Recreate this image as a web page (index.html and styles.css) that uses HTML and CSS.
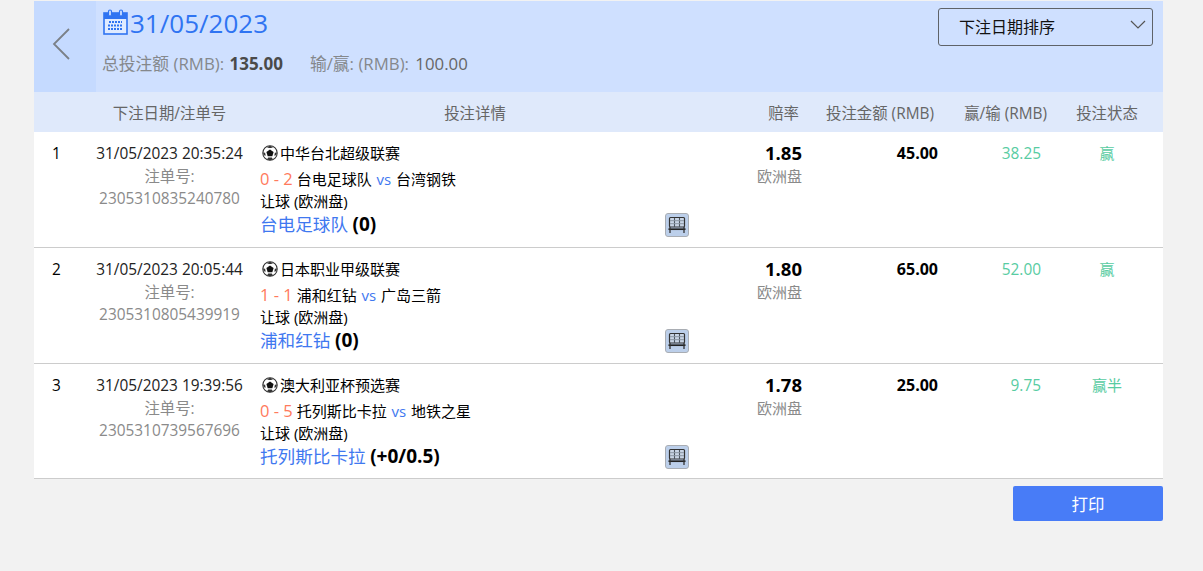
FILE: index.html
```html
<!DOCTYPE html>
<html lang="zh">
<head>
<meta charset="utf-8">
<title>投注详情</title>
<link rel="stylesheet" href="styles.css">
</head>
<body>
<svg class="defs" width="0" height="0" aria-hidden="true">
  <symbol id="tv" viewBox="0 0 24 24">
    <rect x="0.5" y="0.5" width="23" height="23" rx="2.5" fill="#bccfea" stroke="#a9adb3"/>
    <rect x="4.500" y="4.500" width="15" height="9.500" rx="1" fill="#c9d5e6" stroke="#333" stroke-width="1.200"/>
    <path d="M9.500 5v9M14.500 5v9" stroke="#4c5560" stroke-width="1.100"/>
    <path d="M5 7.700h14M5 10.700h14" stroke="#8b95a2" stroke-width="1"/>
    <path d="M3.500 16.200h17" stroke="#222" stroke-width="1.700"/>
    <path d="M5 14v6M19 14v6" stroke="#333" stroke-width="1.300"/>
  </symbol>
  <symbol id="ball" viewBox="0 0 16 16">
    <circle cx="8" cy="8" r="7.200" fill="#fff" stroke="#333" stroke-width="1.100"/>
    <path d="M8 4.500l3.600 2.500-1.300 4.200H5.700L4.400 7z" fill="#111"/>
    <path d="M8 .8v2.200q-2 .2-3-.8zM8 .8v2.200q2 .2 3-.8zM.9 7.500l2.200.2.600 3-1.700-.5zM15.100 7.500l-2.200.2-.600 3 1.700-.5zM5 14.500l1.200-2h3.600l1.200 2-3 .8z" fill="#333"/>
  </symbol>
</svg>
<main class="panel">
  <header class="summary">
    <button class="back" type="button" aria-label="返回">
      <svg width="18" height="32" viewBox="0 0 18 32"><path d="M17 1 2 16l15 15" fill="none" stroke="#7b8087" stroke-width="1.800"/></svg>
    </button>
    <div class="summary-main">
      <h1 class="date">
        <svg class="cal" width="25" height="26" viewBox="0 0 25 26">
          <rect x="1" y="4" width="23" height="21" fill="#fff" fill-opacity=".35" stroke="#2f74f2" stroke-width="1.600"/>
          <rect x="1" y="4" width="23" height="6" fill="#2f74f2"/>
          <rect x="5.500" y="1" width="3" height="6" rx="1.500" fill="#cfe0ff" stroke="#2f74f2" stroke-width="1.200"/>
          <rect x="16.500" y="1" width="3" height="6" rx="1.500" fill="#cfe0ff" stroke="#2f74f2" stroke-width="1.200"/>
          <path d="M6 13h13M5 16.500h15M5 20h15" stroke="#2f74f2" stroke-width="2" stroke-dasharray="2 1"/>
        </svg>
        <span>31/05/2023</span>
      </h1>
      <p class="totals">
        <span>总投注额 (RMB): <b>135.00</b></span>
        <span>输/赢: (RMB): <em>100.00</em></span>
      </p>
    </div>
    <div class="sort">
      <span>下注日期排序</span>
      <svg width="16" height="9" viewBox="0 0 16 9"><path d="M1 1l7 7 7-7" fill="none" stroke="#555" stroke-width="1.200"/></svg>
    </div>
  </header>

  <div class="row head">
    <div></div>
    <div class="c">下注日期/注单号</div>
    <div class="c">投注详情</div>
    <div class="r h-odds">赔率</div>
    <div class="r h-amt">投注金额 (RMB)</div>
    <div class="r h-win">赢/输 (RMB)</div>
    <div class="c h-st">投注状态</div>
  </div>

  <div class="row bet">
    <div class="idx">1</div>
    <div class="when">31/05/2023 20:35:24<small>注单号:</small><small>2305310835240780</small></div>
    <div class="detail">
      <div class="league"><svg class="ball"><use href="#ball"/></svg>中华台北超级联赛</div>
      <div class="match"><span class="score">0 - 2</span> 台电足球队 <span class="vs">vs</span> 台湾钢铁</div>
      <div class="market">让球 (欧洲盘)</div>
      <div class="pick"><span>台电足球队</span> <b>(0)</b></div>
      <svg class="tv"><use href="#tv"/></svg>
    </div>
    <div class="odds"><b>1.85</b><small>欧洲盘</small></div>
    <div class="amt">45.00</div>
    <div class="win">38.25</div>
    <div class="st">赢</div>
  </div>

  <div class="row bet">
    <div class="idx">2</div>
    <div class="when">31/05/2023 20:05:44<small>注单号:</small><small>2305310805439919</small></div>
    <div class="detail">
      <div class="league"><svg class="ball"><use href="#ball"/></svg>日本职业甲级联赛</div>
      <div class="match"><span class="score">1 - 1</span> 浦和红钻 <span class="vs">vs</span> 广岛三箭</div>
      <div class="market">让球 (欧洲盘)</div>
      <div class="pick"><span>浦和红钻</span> <b>(0)</b></div>
      <svg class="tv"><use href="#tv"/></svg>
    </div>
    <div class="odds"><b>1.80</b><small>欧洲盘</small></div>
    <div class="amt">65.00</div>
    <div class="win">52.00</div>
    <div class="st">赢</div>
  </div>

  <div class="row bet">
    <div class="idx">3</div>
    <div class="when">31/05/2023 19:39:56<small>注单号:</small><small>2305310739567696</small></div>
    <div class="detail">
      <div class="league"><svg class="ball"><use href="#ball"/></svg>澳大利亚杯预选赛</div>
      <div class="match"><span class="score">0 - 5</span> 托列斯比卡拉 <span class="vs">vs</span> 地铁之星</div>
      <div class="market">让球 (欧洲盘)</div>
      <div class="pick"><span>托列斯比卡拉</span> <b>(+0/0.5)</b></div>
      <svg class="tv"><use href="#tv"/></svg>
    </div>
    <div class="odds"><b>1.78</b><small>欧洲盘</small></div>
    <div class="amt">25.00</div>
    <div class="win">9.75</div>
    <div class="st">赢半</div>
  </div>

  <div class="actions"><button class="print" type="button">打印</button></div>
</main>
</body>
</html>
```
FILE: styles.css
```css
* { box-sizing: border-box; }
html, body { margin: 0; height: 100%; }
body {
  background: #f2f2f2;
  font-family: "Open Sans", "Noto Sans CJK SC", sans-serif;
  font-size: 15.400px;
  color: #000;
  overflow: hidden;
}
.defs { position: absolute; }
.panel { width: 1129px; margin: 1px 0 0 34px; }

.summary { display: flex; height: 91px; background: #cfe0ff; }
.back {
  width: 62px; border: 0; padding: 0 9px 6px 0; background: #c5daff;
  display: flex; align-items: center; justify-content: center;
}
.summary-main { flex: 1; padding: 7px 0 0 6px; }
.date {
  margin: 0; display: flex; align-items: center; gap: 2px;
  font-size: 26px; font-weight: 400; line-height: 30px; color: #2f74f2;
}
.cal { margin: -3px 0 0 1px; }
.totals { margin: 15px 0 0; display: flex; gap: 27px; font-size: 16.800px; line-height: 22px; color: #85888c; }
.totals b { color: #4a4a4a; margin-left: 1px; font-size: 17px; }
.totals em { font-style: normal; color: #666; margin-left: 2px; }
.sort {
  width: 215px; height: 38px; margin: 7px 10px 0 0;
  border: 1px solid #5f6368; border-radius: 3px;
  display: flex; align-items: center; justify-content: space-between;
  padding: 0 6px 2px 20px; font-size: 16px; color: #111;
}
.sort svg { margin-bottom: 4px; }

.row { display: grid; grid-template-columns: 55px 161px 450px 102px 136px 103px 122px; }
.head { height: 40px; align-items: center; background: #dfe9fb; color: #666; font-size: 15.400px; }
.c { text-align: center; white-space: nowrap; }
.r { text-align: right; white-space: nowrap; }
.h-odds { padding-right: 3px; }
.h-amt { padding-right: 4px; }
.h-win { margin-right: -6px; }
.h-st { padding-left: 10px; }

.bet { height: 116px; background: #fff; border-bottom: 1px solid #ccc; padding-top: 10px; }
.bet:nth-last-child(2) { height: 115px; }
.idx { padding: 1px 0 0 18px; line-height: 22px; }
.when { padding-top: 1px; line-height: 22px; color: #222; white-space: nowrap; text-align: center; }
.when small { display: block; font-size: 15.400px; color: #8a8a8a; line-height: 23px; }
.when small + small { line-height: 21px; }

.detail { position: relative; padding-left: 10px; font-size: 15px; white-space: nowrap; }
.league { display: flex; align-items: center; gap: 2px; line-height: 22px; }
.ball { width: 16px; height: 16px; margin-left: 2px; }
.match { line-height: 22px; margin-top: 4px; }
.score { color: #ff7a5c; font-size: 16.500px; }
.vs { color: #3f78f0; margin: 0 1px; }
.market { line-height: 22px; }
.pick { line-height: 24px; font-size: 17.600px; }
.pick span { color: #3f78f0; }
.pick b { font-size: 19px; }
.tv { position: absolute; left: 415px; top: 71px; width: 24px; height: 24px; }

.odds { text-align: right; line-height: 22px; }
.odds b { display: block; font-size: 18.500px; }
.odds small { display: block; font-size: 15px; color: #8a8a8a; line-height: 24px; }
.amt { text-align: right; font-weight: 700; line-height: 22px; font-size: 16px; }
.win { padding-top: 1px; text-align: right; color: #58cca2; line-height: 22px; }
.st { text-align: center; padding-left: 10px; color: #58cca2; line-height: 22px; font-size: 15px; }

.actions { display: flex; justify-content: flex-end; padding-top: 7px; }
.print {
  width: 150px; height: 35px; border: 0; border-radius: 2px;
  background: #487cf7; color: #fff; font: inherit; font-size: 16.500px;
}
```
